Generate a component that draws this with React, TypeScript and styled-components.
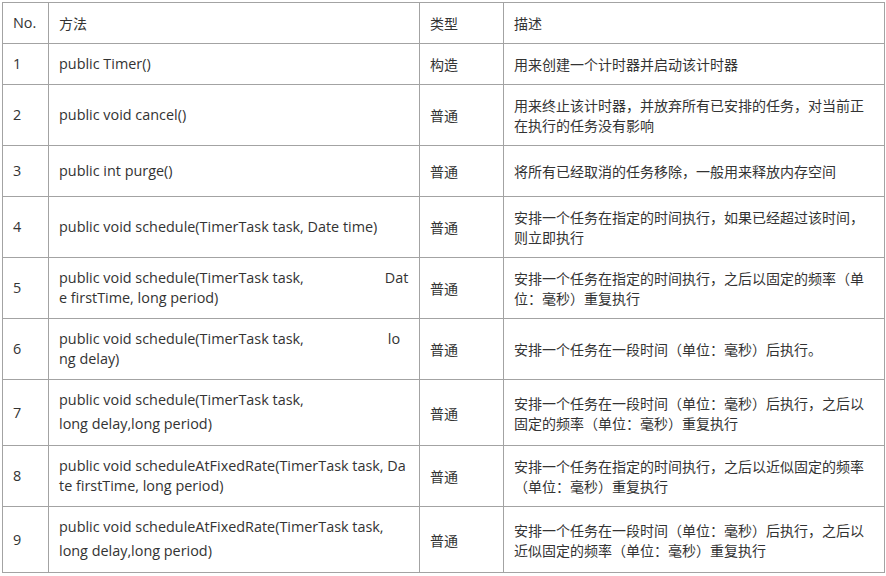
import React from 'react';
import styled, { createGlobalStyle } from 'styled-components';

const GlobalStyle = createGlobalStyle`
  html, body {
    margin: 0;
    padding: 0;
    background: #ffffff;
  }
`;

const Page = styled.div`
  padding: 2px;
  background: #ffffff;
`;

const Table = styled.table`
  width: 882px;
  table-layout: fixed;
  border-collapse: collapse;
  color: #333333;
`;

const HeadCell = styled.th<{ $cjk?: boolean }>`
  border: 1px solid #a3a3a3;
  padding: 10px 10px;
  height: 20px;
  text-align: left;
  font-weight: normal;
  vertical-align: middle;
  line-height: 20px;
  font-size: ${(p) => (p.$cjk ? '14px' : '14.4px')};
  font-family: ${(p) =>
    p.$cjk
      ? '"Noto Sans CJK SC", sans-serif'
      : '"Open Sans", "Noto Sans CJK SC", sans-serif'};
`;

const Cell = styled.td<{ $cjk?: boolean; $loose?: boolean; $tall?: boolean }>`
  border: 1px solid #a3a3a3;
  padding: ${(p) => (p.$loose ? '8px 10px 9px' : p.$tall ? '15px 10px' : '10px 10px')};
  vertical-align: middle;
  line-height: ${(p) => (p.$loose ? '24px' : '20px')};
  font-size: ${(p) => (p.$cjk ? '14px' : '14.4px')};
  font-family: ${(p) =>
    p.$cjk
      ? '"Noto Sans CJK SC", sans-serif'
      : '"Open Sans", "Noto Sans CJK SC", sans-serif'};
`;

const Line = styled.div`
  white-space: nowrap;
`;

const Tail = styled.span<{ $gap: number }>`
  margin-left: ${(p) => p.$gap}px;
`;

type Row = {
  no: string;
  method: { text: string; tail?: string; gap?: number }[];
  kind: string;
  desc: string[];
  loose?: boolean;
  tall?: boolean;
};

const rows: Row[] = [
  { no: '1', method: [{ text: 'public Timer()' }], kind: '构造', desc: ['用来创建一个计时器并启动该计时器'] },
  {
    no: '2',
    method: [{ text: 'public void cancel()' }],
    kind: '普通',
    desc: ['用来终止该计时器，并放弃所有已安排的任务，对当前正', '在执行的任务没有影响'],
  },
  {
    no: '3',
    method: [{ text: 'public int purge()' }],
    kind: '普通',
    desc: ['将所有已经取消的任务移除，一般用来释放内存空间'],
    tall: true,
  },
  {
    no: '4',
    method: [{ text: 'public void schedule(TimerTask task, Date time)' }],
    kind: '普通',
    desc: ['安排一个任务在指定的时间执行，如果已经超过该时间，', '则立即执行'],
  },
  {
    no: '5',
    method: [
      { text: 'public void schedule(TimerTask task,', tail: 'Dat', gap: 81 },
      { text: 'e firstTime, long period)' },
    ],
    kind: '普通',
    desc: ['安排一个任务在指定的时间执行，之后以固定的频率（单', '位：毫秒）重复执行'],
  },
  {
    no: '6',
    method: [
      { text: 'public void schedule(TimerTask task,', tail: 'lo', gap: 84 },
      { text: 'ng delay)' },
    ],
    kind: '普通',
    desc: ['安排一个任务在一段时间（单位：毫秒）后执行。'],
  },
  {
    no: '7',
    method: [{ text: 'public void schedule(TimerTask task,' }, { text: 'long delay,long period)' }],
    kind: '普通',
    desc: ['安排一个任务在一段时间（单位：毫秒）后执行，之后以', '固定的频率（单位：毫秒）重复执行'],
    loose: true,
  },
  {
    no: '8',
    method: [
      { text: 'public void scheduleAtFixedRate(TimerTask task, Da' },
      { text: 'te firstTime, long period)' },
    ],
    kind: '普通',
    desc: ['安排一个任务在指定的时间执行，之后以近似固定的频率', '（单位：毫秒）重复执行'],
  },
  {
    no: '9',
    method: [{ text: 'public void scheduleAtFixedRate(TimerTask task,' }, { text: 'long delay,long period)' }],
    kind: '普通',
    desc: ['安排一个任务在一段时间（单位：毫秒）后执行，之后以', '近似固定的频率（单位：毫秒）重复执行'],
    loose: true,
  },
];

const App = () => (
  <Page>
    <GlobalStyle />
    <Table>
      <colgroup>
        <col style={{ width: 46 }} />
        <col style={{ width: 371 }} />
        <col style={{ width: 84 }} />
        <col style={{ width: 381 }} />
      </colgroup>
      <thead>
        <tr>
          <HeadCell>No.</HeadCell>
          <HeadCell $cjk>方法</HeadCell>
          <HeadCell $cjk>类型</HeadCell>
          <HeadCell $cjk>描述</HeadCell>
        </tr>
      </thead>
      <tbody>
        {rows.map((row) => (
          <tr key={row.no}>
            <Cell $tall={row.tall}>{row.no}</Cell>
            <Cell $loose={row.loose} $tall={row.tall}>
              {row.method.map((m, i) => (
                <Line key={i}>
                  {m.text}
                  {m.tail && <Tail $gap={m.gap ?? 0}>{m.tail}</Tail>}
                </Line>
              ))}
            </Cell>
            <Cell $cjk $tall={row.tall}>{row.kind}</Cell>
            <Cell $cjk $tall={row.tall}>
              {row.desc.map((d, i) => (
                <Line key={i}>{d}</Line>
              ))}
            </Cell>
          </tr>
        ))}
      </tbody>
    </Table>
  </Page>
);

export default App;
